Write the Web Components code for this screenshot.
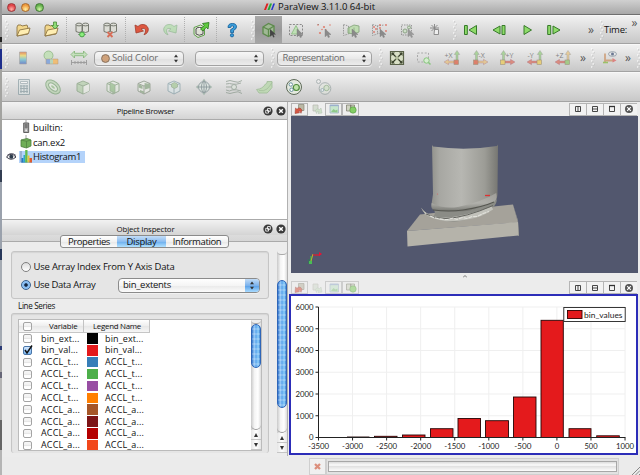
<!DOCTYPE html>
<html lang="en"><head><meta charset="utf-8"><title>ParaView</title>
<style>
html,body{margin:0;width:640px;height:475px;overflow:hidden}
body{font:500 9.5px/12px "Open Sans","Noto Sans",sans-serif;color:#111;background:#999}
</style></head><body>
<pv-window></pv-window>
<script>
function define(name, html, setup){
  const t=document.createElement('template'); t.innerHTML=html;
  customElements.define(name, class extends HTMLElement{
    connectedCallback(){
      if(this.shadowRoot) return;
      const r=this.attachShadow({mode:'open'});
      const c=t.content.cloneNode(true);
      r.append(c);
      if(setup) setup.call(this,r);
    }
  });
}

/* Text set to a given width by adjusting its tracking. */
define('fit-text','<style>:host{display:inline-block;white-space:pre;flex:none}span{display:inline-block}</style><span><slot></slot></span>',function(r){
  const w=+this.getAttribute('w'), s=r.querySelector('span'), n=this.textContent.length;
  const m=s.getBoundingClientRect().width;
  s.style.letterSpacing=((w-m)/n).toFixed(3)+'px'; this.style.width=w+'px';
});

const cube=(f,s)=>`<path d="M4 6.500l6-2.500 6 2.500v7.500l-6 3-6-3z" fill="${f}" stroke="${s}"/><path d="M4 6.500l6 2.500 6-2.500M10 9v8" fill="none" stroke="${s}"/>`;
const arrow='<path d="M11 9l6 5.500-2.600.1 1.200 2.500-1.300.5-1.200-2.500-2 1.700z" fill="#8a8a8a" stroke="#777" stroke-width=".4"/>';
const dash='<path d="M3.500 4.500h13v11h-13z" fill="none" stroke="#8a8a8a" stroke-dasharray="2 1.400"/>';
const cyls='<g fill="#dcddd6" stroke="#6b6e64" stroke-width=".9"><path d="M4 4.500v7q3 2 6 0v-7z"/><path d="M10.500 4.500v7q3 2 6 0v-7z"/><ellipse cx="7" cy="4.500" rx="3" ry="1.400"/><ellipse cx="13.500" cy="4.500" rx="3" ry="1.400"/></g>';
const folder='<path d="M4 16V7l1-2h3l1 1 5-1 1 3v6z" fill="#f2d78c" stroke="#8c7443" stroke-width=".9"/><path d="M4 16l2.500-6L17 8l-1.500 5.500z" fill="#ffeeb2" stroke="#8c7443" stroke-width=".9"/>';
function axis(lbl,box,up,side,right){
  const bx=right?12:3.500;
  return `<g opacity=".68"><path d="M${bx+2} 12V6.500h-1.700l2.700-4 2.700 4h-1.700V12z" fill="${up}" stroke="#777" stroke-width=".4"/>`+
  (right?`<path d="M12 13H6.500v-1.700l-4.500 2.700 4.500 2.700V15H12z" fill="${side}" stroke="#835" stroke-width=".3"/>`:`<path d="M8 13h5.500v-1.700l4.500 2.700-4.500 2.700V15H8z" fill="${side}" stroke="#835" stroke-width=".3"/>`)+
  `<rect x="${bx}" y="12" width="4.500" height="4.500" fill="${box}" stroke="#875" stroke-width=".6"/><text x="${right?2.500:8.500}" y="10" font-size="7" fill="#555">${lbl}</text></g>`;
}
const ICON={
 open:folder,
 save:folder+'<path d="M12.500 9V5.500h-2L14 2l3.500 3.500h-2V9z" transform="rotate(180 14 5.500)" fill="#8edb75" stroke="#4c8b3b" stroke-width=".8"/>',
 connect:cyls+'<path d="M6 14.500h8" stroke="#8a9a8a"/><circle cx="10" cy="14.500" r="2.400" fill="#8dee7e" stroke="#3c9b3b" stroke-width=".9"/>',
 disconnect:cyls+'<path d="M7.500 12l5 5m0-5l-5 5" stroke="#d76e58" stroke-width="1.900"/>',
 undo:'<path d="M3 5l1 8 7.500-2-2.500-2.200q4.500-1.500 4.500 2 0 2-1.500 4 4.500-1.500 4.300-6Q15 4 9.500 4.500 7.500 5 6 6.500z" fill="#dd5740" stroke="#a13c2c" stroke-width=".8"/>',
 redo:'<g opacity=".6" transform="translate(20 0) scale(-1 1)"><path d="M3 5l1 8 7.500-2-2.500-2.200q4.500-1.500 4.500 2 0 2-1.500 4 4.500-1.500 4.300-6Q15 4 9.500 4.500 7.500 5 6 6.500z" fill="#a9dda0" stroke="#74a873" stroke-width=".8"/></g>',
 export:'<path d="M3 7.500v7l4 3 6.500-2.500V7l-4-2z" fill="#e2e4d8" stroke="#5fa04c"/><ellipse cx="8.500" cy="9" rx="3.500" ry="1.500" fill="#fff" stroke="#444"/><path d="M5 9v5q3 2.500 7 0V9" fill="#dfe0d6" stroke="#555"/><path d="M9.500 9l3.800-3.500L11.500 3.500l6.500-1-1 6.500-1.700-1.700L12 11z" fill="#5fcb3f" stroke="#27761a" stroke-width=".8"/>',
 help:'<path d="M6 7.500Q6 3.500 10.300 3.500q4.200 0 4.200 3.400 0 2-3 3.600v2.200H8.700V9.500q3-1.200 3-2.500 0-1.200-1.500-1.200T8.700 7.500z" fill="#3c9edb" stroke="#16639d" stroke-width=".9"/><circle cx="10" cy="15.300" r="1.600" fill="#3c9edb" stroke="#16639d" stroke-width=".9"/>',
 selcube:'<path d="M4 7l5.500-3.500L15 6v7l-5.500 3.500L4 13.500z" fill="#9fb894" stroke="#5d8a4c" stroke-width="1.300"/><path d="M4 7l5.500 2.500L15 6M9.500 9.500v7" stroke="#5d8a4c" stroke-width="1.300" fill="none"/><path d="M11 9l6 5.500-2.600.1 1.200 2.500-1.300.5-1.200-2.500-2 1.700z" fill="#444"/>',
 seltri:dash+'<path d="M10 5.500l4.500 8.500h-9z" fill="#bfe0b6" stroke="#88bb7c" stroke-width=".8"/>'+arrow,
 selpts:dash.replace('2 1.4','1.5 2')+'<g fill="#e08070"><circle cx="10" cy="7" r="1.100"/><circle cx="6" cy="13" r="1.100"/><circle cx="4" cy="5" r=".8"/><circle cx="16" cy="5" r=".8"/><circle cx="8" cy="9.500" r=".8"/><circle cx="12" cy="10" r=".8"/></g>'+arrow,
 selfr:'<path d="M2.500 4.500l5 1.500v8l-5 1.500z" fill="none" stroke="#999" stroke-dasharray="1.500 1"/><path d="M7 8l6-3 5 1v6l-5 2-6-1z" fill="#bfdcb2" stroke="#8aa881" stroke-width=".9"/><path d="M8 7v7M13 7.500v6" stroke="#8aa881" stroke-width=".8"/>'+arrow,
 selfrp:'<path d="M3.500 4.500l5 1.500v8l-5 1.500zM8 6l7-1M8 13l6 1" fill="none" stroke="#999" stroke-dasharray="1.500 1"/><g fill="#dd7769"><circle cx="5" cy="7" r=".9"/><circle cx="7" cy="9" r=".9"/><circle cx="5" cy="12" r=".9"/><circle cx="11" cy="5" r=".9"/><circle cx="17" cy="5" r=".9"/><circle cx="17" cy="11" r=".9"/><circle cx="11" cy="8" r=".9"/></g>'+arrow,
 selblk:'<g opacity=".8"><path d="M4.500 5h10v10h-10z" fill="none" stroke="#888" stroke-dasharray="1.500 1"/><circle cx="8" cy="11" r="2" fill="#cde0c6" stroke="#7c9a74"/><circle cx="12" cy="7.500" r="1.500" fill="#cde0c6" stroke="#7c9a74"/>'+arrow+'</g>',
 pick:'<g stroke="#858585" stroke-width=".9" fill="none"><path d="M5 8h9M9.500 4v7M6.500 5l6 6M12.500 5l-6 6"/><path d="M9.500 9.500h4v5h-4.500z" fill="#eee"/></g>',
 first:'<path d="M3.500 5.500h2.800v9H3.500zM15.500 5.500v9l-7.500-4.500z" fill="#8edb69" stroke="#377a2a"/>',
 prev:'<path d="M13 5.500h3v9h-3zM11 6v8L4 10z" fill="#8edb69" stroke="#377a2a"/>',
 play:'<path d="M7 5.500v9l7.500-4.500z" fill="#8edb69" stroke="#377a2a"/>',
 next:'<path d="M3.700 5.500h3v9h-3zM9 6v8l7-4z" fill="#8edb69" stroke="#377a2a"/>',
 cmap:'<defs><linearGradient id="g" x2="0" y2="1"><stop stop-color="#e88a5d"/><stop offset=".3" stop-color="#e8da85"/><stop offset=".6" stop-color="#8dcbd0"/><stop offset="1" stop-color="#6e86cb"/></linearGradient></defs><path d="M6.500 4h7v12h-7z" fill="url(#g)" stroke="#a9a9a9" stroke-width=".7"/>',
 cedit:'<circle cx="7.500" cy="7.500" r="4.500" fill="#c4dfba" stroke="#8fb585" stroke-width=".8"/><path d="M5 11h4v5H5z" fill="#89a9dc"/><path d="M9 11h3v5H9z" fill="#b8d4ba"/><path d="M12 11h5v5h-5z" fill="#efbd76"/><path d="M5 11h12v5H5z" fill="none" stroke="#b09a80" stroke-width=".5"/>',
 range:'<path d="M2 6.500L5.500 3v2.300h9V3L18 6.500 14.500 10V7.700h-9V10z" fill="#c5dfbd" stroke="#80b475" stroke-width=".8"/><path d="M2.500 12v5M17.500 12v5M2.500 14.500h15M6 13v3M9 13v3M12 13v3M15 13v3" stroke="#999" fill="none" stroke-width=".9"/>',
 reset:'<path d="M3.500 3.500h13v13h-13z" fill="#d9e0c6" stroke="#5b634a" stroke-width="1.200"/><path d="M5 5l10 10M15 5L5 15" stroke="#343c27" stroke-width="1.200"/><path d="M4.500 4.500h3.500l-3.500 3.500zM15.500 4.500h-3.500l3.500 3.500zM4.500 15.500h3.500l-3.500-3.500zM15.500 15.500h-3.500l3.500-3.500z" fill="#3d452e"/><circle cx="10" cy="10" r="1.900" fill="#b4be9c"/>',
 zoombox:'<path d="M3.500 5h11v9h-11z" fill="none" stroke="#aaa" stroke-dasharray="2 1.600"/><circle cx="12.500" cy="12.500" r="2.700" fill="#d6ecd0" stroke="#86c67c"/><path d="M14.500 14.500l2 2" stroke="#86c67c" stroke-width="1.500"/>',
 px:axis('+X','#e2573a','#8fca78','#e8c078',true),mx:axis('-X','#e2573a','#8fca78','#e8c078',false),
 py:axis('+Y','#efcb4e','#8fca78','#db6a57',false),my:axis('-Y','#efcb4e','#8fca78','#db6a57',true),pz:axis('+Z','#8cc564','#e8c078','#db6a57',true),
 center:'<g opacity=".75"><path d="M5 5.500v9M5 12.500h9" stroke="#cb9367" stroke-width="1.800"/><path d="M3 14.500h5" stroke="#8b4" stroke-width="1.600"/><path d="M12.500 10l4 2.500-4 2z" fill="#d66"/><ellipse cx="12.500" cy="6" rx="4" ry="2.300" fill="#eee" stroke="#678" stroke-width=".8"/><circle cx="12.500" cy="6" r="1.500" fill="#457"/></g>',
 calc:'<g opacity=".6"><path d="M4.500 2.500h11v15h-11z" fill="#dbe4e4" stroke="#7b9299"/><path d="M6.500 4.500h7v2h-7z" fill="#fff" stroke="#7b9299" stroke-width=".8"/><path d="M6 9h8M6 11.500h8M6 14.500h8M7 8v8M10 8v8M13 8v8" stroke="#7b9299" stroke-width="1.100"/></g>',
 contour:'<g opacity=".62" transform="rotate(42 10 10)"><ellipse cx="10" cy="10" rx="8.500" ry="5.500" fill="#b7d4ac" stroke="#6c9a68"/><ellipse cx="10" cy="10" rx="5.300" ry="2.800" fill="#e5ede0" stroke="#6c9a68"/><ellipse cx="10" cy="10" rx="2.400" ry="1" fill="#8ab87d"/></g>',
 clip:'<g opacity=".55">'+cube('#a8cb9c','#6b8d63')+'<path d="M10.500 9.500l5.500-2.500v7l-5.500 2.500z" fill="#eef2ea"/></g>',
 slice:'<g opacity=".55">'+cube('#e6eee2','#6b8d63')+'<path d="M7 5.500l5 2.500v8l-5-2z" fill="#83b775" stroke="#6b8d63" stroke-width=".7"/></g>',
 thresh:'<g opacity=".55">'+cube('#edf0e9','#6b7a65')+'<path d="M4.500 7l4 2v3l-4-1.500zM10.500 6l5.500 1v4l-5 1.500zM6 13l4 1.500v2L6 15z" fill="#74986b"/></g>',
 extract:'<g opacity=".55">'+cube('#dce9ec','#70909a')+'<path d="M7.500 7l3-1.500L13.500 7v3l-3 1.500-3-1.500z" fill="#95c284" stroke="#6b8d63" stroke-width=".7"/></g>',
 glyph:'<g opacity=".65" fill="none" stroke="#6d8083"><circle cx="10" cy="10" r="5.500" fill="#dde8e2"/><ellipse cx="10" cy="10" rx="2.500" ry="5.500"/><path d="M4 10h12M10 4v12"/></g><g fill="#a5b6ad"><path d="M8.300 4L10 1.800 11.700 4zM8.300 16l1.700 2.200 1.700-2.200zM4 8.300L1.800 10 4 11.700zM16 8.300l2.200 1.700-2.200 1.700z"/></g>',
 stream:'<g opacity=".65" fill="none" stroke="#849487"><path d="M2 4.500q4-2 8 0t8-1M2 7q4-1 6 0 4 1 9-1M2 13q4 2 6 0 4-1 9 1M2 15.500q4 2 8 0t8 1M2 10h5"/><circle cx="10" cy="10" r="2.500" fill="#dde6dc"/></g>',
 warp:'<path d="M2.500 12.500q6-.5 9-5.500l1.500-1V4.500h5v6q-3 4-5 5.500H5z" fill="#bfd8b5" stroke="#a0bb98" stroke-width=".8"/><path d="M5 13.500q5 1 8-1.500 3-3 5-6.500" fill="none" stroke="#a0bb98" stroke-width=".7"/>',
 group:'<circle cx="10" cy="10" r="7.500" fill="#e4e9df" stroke="#5d6a58"/><circle cx="6.800" cy="7.500" r="1.700" fill="#fff" stroke="#69929e"/><circle cx="12.300" cy="10.500" r="3" fill="#bfe3a9" stroke="#4f8a3d" stroke-width="1.200"/><circle cx="7.500" cy="12.800" r="1.700" fill="#fff" stroke="#69929e"/>',
 level:'<g opacity=".5"><circle cx="11" cy="11.500" r="5.800" fill="#e4e9df" stroke="#788"/><circle cx="12.500" cy="11" r="2.700" fill="#cfe6c2" stroke="#6a9a60"/><circle cx="8.300" cy="13" r="1.500" fill="#fff" stroke="#69929e"/><circle cx="4.500" cy="4.500" r="2" fill="#eee" stroke="#788"/></g>',
 server:'<path d="M10 2v3" stroke="#888" stroke-width=".8"/><path d="M7.700 5h5v9.500h-5z" fill="#aaa" stroke="#555" stroke-width=".9"/><path d="M8.700 7h3M8.700 9h3" stroke="#333" stroke-width=".8"/><path d="M9.300 11.500h1.700v1.700H9.300z" fill="#eee"/>',
 cube:'<path d="M10 2v4" stroke="#888" stroke-width=".8"/><path d="M5 7l6-1.500 4 1.500v6l-4.500 2L5 13.500z" fill="#6fae57" stroke="#4d7d3e" stroke-width=".8"/><path d="M5 7l5.500 1.300L15 7M10.500 8.300v6.500" stroke="#4d7d3e" fill="none" stroke-width=".7"/>',
 hist:'<path d="M5 4v11h11" stroke="#678" fill="none" stroke-width=".7"/><path d="M5.500 11h2v4.500h-2z" fill="#2677c4"/><path d="M7.500 8h1.600v7.500H7.500z" fill="#2ba9c7"/><path d="M9.200 3h2.300v12.500H9.200z" fill="#63bb4b"/><path d="M11.500 8.500h2v7h-2z" fill="#e6c63c"/><path d="M13.500 11h2.500v4.500h-2.500z" fill="#e05a2b"/>',
 eye:'<path d="M5.500 10q4.500-5.500 9.500 0-5 4.500-9.500 0z" fill="#f4f4f4" stroke="#223" stroke-width=".9"/><circle cx="10.300" cy="9.800" r="2" fill="#2c3b4c"/><path d="M6 8.500q4.500-4 9 0" stroke="#445" fill="none" stroke-width=".8"/>',
 float:'<circle cx="10" cy="10" r="4.600" fill="#3a3a3a"/><path d="M9.500 7.500h2.800v2.800h-2.800zM7.700 9.300h2.800v2.800H7.700z" fill="#3a3a3a" stroke="#fff" stroke-width=".8"/>',
 close:'<circle cx="10" cy="10" r="4.600" fill="#3a3a3a"/><path d="M8.200 8.200l3.600 3.600M11.800 8.200l-3.600 3.600" stroke="#fff" stroke-width="1.400"/>',
 split:'<path d="M7.500 7.500h5v5h-5zM10 7.500v5" fill="none" stroke="#333" stroke-width=".9"/>',
 splitv:'<path d="M7.500 7.500h5v5h-5zM7.500 10h5" fill="none" stroke="#333" stroke-width=".9"/>',
 max:'<path d="M7.500 7.500h5v5h-5z" fill="none" stroke="#333" stroke-width=".9"/><path d="M7 7.500h6" stroke="#333" stroke-width="1.300"/>',
 closev:'<circle cx="10" cy="10" r="4" fill="#555"/><path d="M8.200 8.200l3.600 3.600M11.800 8.200l-3.600 3.600" stroke="#fff" stroke-width="1.200"/>',
 vundo:'<path d="M8.500 5.500h5.500v6H8.500z" fill="#bbb9a6" stroke="#887" stroke-width=".7"/><path d="M5 14.500l.5-5.500 1.500 1.300q3-3 5 1l-1 3q-1-3-2.500-2l1 1.500z" fill="#d65643" stroke="#963b2e" stroke-width=".5"/>',
 vredo:'<g opacity=".45"><path d="M6 6h5v6H6z" fill="#b5c8ad" stroke="#776" stroke-width=".7"/><path d="M15 14l-1-5-1.500 1.500q-3-2-4 1l1 3q1-3 2.500-2l-1 2z" fill="#a6cd9a" stroke="#686" stroke-width=".5"/></g>',
 vcam:'<path d="M6 6h8.500v8H6z" fill="#c7e6cc" stroke="#9fb3c4" stroke-width=".8"/><path d="M6 6.500h8.500" stroke="#9bb0cc" stroke-width="1.300"/><path d="M7 13l2.500-3 2 1.500 2-1v3z" fill="#8fc98a"/>',
 vgreen:'<path d="M5.500 6h4.500v6H5.500zM9.500 6h4v6h-4z" fill="#d0d3c3" stroke="#776" stroke-width=".7"/><circle cx="12" cy="11" r="3.200" fill="#84ce65" stroke="#4f943b" stroke-width=".6"/>'
};
define('pv-icon','<style>:host{display:flex;flex:none;width:var(--w,20px);height:var(--h,20px);align-items:center;justify-content:center}svg{flex:none;overflow:visible;font:400 10px "Open Sans",sans-serif}</style><svg width="20" height="20" viewBox="0 0 20 20"></svg>',function(r){
  r.querySelector('svg').innerHTML=ICON[this.getAttribute('name')];
  const w=this.getAttribute('w'); if(w) this.style.setProperty('--w',w+'px');
});
define('pv-handle','<style>:host{display:block;flex:none;width:4px;height:20px}svg{display:block}</style><svg width="4" height="20"></svg>',function(r){
  let s='';for(let i=0;i<7;i++){const x=i%2?2.200:.8,y=1+i*3;s+=`<circle cx="${x+.7}" cy="${y+.7}" r=".8" fill="#bdbdbd"/><circle cx="${x}" cy="${y}" r=".8" fill="#fff"/>`}
  r.querySelector('svg').innerHTML=s;
});
define('pv-sep','<style>:host{display:block;flex:none;width:3px;height:26px;background:repeating-linear-gradient(#b0b0b0 0 1px,transparent 1px 2px) 1px 0/1px 100% no-repeat}</style>');
define('pv-gap','<style>:host{display:block;flex:none}</style>',function(){this.style.width=this.getAttribute('w')+'px'});
define('pv-toolbar','<style>:host{display:flex;align-items:center;height:29px;box-sizing:border-box;background:linear-gradient(#f1f1f1,#dedede 45%,#c8c8c8);border-top:1px solid #f8f8f8;border-bottom:1px solid #a3a3a3;overflow:hidden;padding-left:3px}</style><slot></slot>');
define('pv-more','<style>:host{display:block;flex:none;text-align:center;color:#555;font:400 12px/10px "Open Sans",sans-serif}</style><slot></slot>',function(){this.style.width=this.getAttribute('w')+'px'});
define('pv-combo',`<style>:host{display:flex;align-items:center;box-sizing:border-box;flex:none;height:15px;border:1px solid #a2a2a2;border-radius:4px;background:linear-gradient(#f7f7f7,#e9e9e9 50%,#dfdfdf 51%,#ececec);box-shadow:0 1px 0 #f1f1f1;color:#6b6b6b;overflow:hidden}
 .t{flex:1;display:flex;align-items:center}.a{width:14px;height:100%;display:flex;align-items:center;justify-content:center}
 :host([active]){border-color:#8b8b8b;background:linear-gradient(#fff,#f5f5f5 50%,#e9e9e9 51%,#fbfbfb);color:#111}:host([active]) .a{background:linear-gradient(#c2dcf7,#7cb2ec 50%,#559de7 51%,#a9dbff);}</style>
 <div class="t"><slot></slot></div><div class="a"><svg width="6" height="9"><path d="M1 3.300L3 .5l2 2.800zM1 5.700L3 8.500l2-2.800z" fill="#333"/></svg></div>`,function(){this.style.width=this.getAttribute('w')+'px'});
define('pv-titlebar',`<style>:host{display:flex;height:15px;box-sizing:border-box;background:linear-gradient(#d0d0d0,#a8a8a8);border-bottom:1px solid #6f6f6f;align-items:center;color:#111}
 i{width:9px;height:9px;border-radius:50%;box-sizing:border-box;margin-left:5px;border:1px solid #933}
 .r{background:radial-gradient(circle at 50% 75%,#ffb1a8,#e2474b 60%);border-color:#9e3438}.y{background:radial-gradient(circle at 50% 75%,#fff0a0,#ee9a3d 65%);border-color:#aa6a2b}.g{background:radial-gradient(circle at 50% 75%,#d0f5a5,#63b04b 65%);border-color:#417a34}
 svg{margin-left:220px;margin-right:3px}.l{display:flex}</style><div class="l"><i class="r"></i><i class="y"></i><i class="g"></i></div>
 <svg width="11" height="8"><path d="M2.500 .5h2L2 7H0z" fill="#d22"/><path d="M6 .5h2L5.500 7h-2z" fill="#2a3"/><path d="M9.300 .5H11L8.500 7H7z" fill="#23c"/></svg><slot></slot>`);
define('dock-title','<style>:host{display:flex;align-items:center;box-sizing:border-box;height:18px;background:linear-gradient(#f2f2f2,#d4d4d4);font-size:7.900px}.c{flex:1;padding-left:28px;display:flex;justify-content:center}pv-icon{--w:13px}</style><div class="c"><slot></slot></div><pv-icon name="float"></pv-icon><pv-icon name="close"></pv-icon>');
define('tree-row','<style>:host{display:flex;align-items:center;height:14.500px;padding-left:1px}.e{width:16px;height:14px;display:flex;align-items:center;justify-content:center}.b{display:flex;align-items:center;height:12px;padding-right:4px}:host([sel]) .b{background:#b4d3fa}pv-icon{--w:14px;--h:12px}</style><div class="e"></div><div class="b"><pv-icon></pv-icon><slot></slot></div>',function(r){
  const i=document.createElement('pv-icon');i.setAttribute('name',this.getAttribute('icon'));r.querySelector('.b pv-icon').replaceWith(i);
  if(this.hasAttribute('sel')){const e=document.createElement('pv-icon');e.setAttribute('name','eye');r.querySelector('.e').append(e);}
});
define('tab-bar',`<style>:host{display:flex;justify-content:center;height:13px;background:linear-gradient(#dcdcdc,#d6d6d6 6px,#aaa 6px,#aaa 7px,#ececec 7px)}
 .g{display:flex;box-sizing:border-box;border:1px solid #8b8b8b;border-radius:3px;overflow:hidden;background:linear-gradient(#fff,#f1f1f1 50%,#e6e6e6 51%,#fbfbfb)}
 .g div{display:flex;justify-content:center;align-items:center;height:11px}.s{background:linear-gradient(#c5def8,#8cbdf0 50%,#69aced 51%,#b2e2ff)}</style>
 <div class="g"><div style="width:56px"><fit-text w="42">Properties</fit-text></div><div class="s" style="width:49px"><fit-text w="30">Display</fit-text></div><div style="width:62px"><fit-text w="48.500">Information</fit-text></div></div>`);
define('radio-row','<style>:host{display:flex;align-items:center;height:18px}i{width:10px;height:10px;border-radius:50%;border:1px solid #808080;background:linear-gradient(#ddd,#fff);box-sizing:border-box;margin-right:2.500px;flex:none}:host([on]) i{border-color:#3a6290;background:radial-gradient(circle,#14263f 0 1.300px,#83b8ef 2.200px,#a8d6fc)}</style><i></i><slot></slot>');
define('scroll-bar',`<style>:host{display:flex;flex-direction:column;flex:none;width:10px;box-sizing:border-box;background:linear-gradient(90deg,#c9c9c9,#f4f4f4 35%,#fff 70%,#dcdcdc)}
 .top{height:4px;border-bottom:1px solid #aaa;border-radius:0 0 5px 5px;background:#eee;box-sizing:border-box}.th{box-sizing:border-box;border-radius:5px;border:1px solid #2f66b8;background:repeating-linear-gradient(#fff0 0 3px,#ffffff30 3px 5px),linear-gradient(90deg,#2f73cb,#9acbf7 28%,#5ca5ec 50%,#8fd0fa 78%,#3b7fd0)}
 .sp{flex:1;border-bottom:1px solid #999;border-radius:0 0 5px 5px}.a{height:10px;box-sizing:border-box;border-bottom:1px solid #c5c5c5;background:linear-gradient(90deg,#e5e5e5,#fff,#e5e5e5);display:flex;justify-content:center;align-items:center}</style>
 <div class="top"></div><div class="th"></div><div class="sp"></div><div class="a"><svg width="4" height="4"><path d="M0 4L2 0l2 4z" fill="#333"/></svg></div><div class="a"><svg width="4" height="4"><path d="M0 0l2 4 2-4z" fill="#333"/></svg></div>`,function(r){
  const t=r.querySelector('.th');t.style.height=this.getAttribute('thumb')+'px';t.style.marginTop=this.getAttribute('offset')+'px';});
define('series-table',`<style>:host{display:block;flex:1;background:#fff;overflow:hidden}
 .h,.r{display:grid;grid-template-columns:22px 46px 18px 60px;align-items:center}.h{height:12.500px;width:131px;box-sizing:border-box;border-bottom:1px solid #c6c6c6;background:linear-gradient(#fff,#eee 50%,#e6e6e6 51%,#f6f6f6);grid-template-columns:22px 43px 66px;font-size:7.900px;overflow:hidden}
 .h>div{height:12px;display:flex;align-items:center;border-right:1px solid #c3c3c3;padding-left:8px}.h>div:last-child{padding-left:9px}
 .r{height:11.870px;font-size:9px}b{width:9px;height:9px;box-sizing:border-box;border:1px solid #a4a4a4;border-radius:2px;background:linear-gradient(#f7f7f7,#f0f0f0 48%,#dedede 52%,#fff 65%);margin-left:4px;display:block}.on{border-color:#4a76a8;background:linear-gradient(#d5e9ff,#7ab6f2)}b svg{display:block;overflow:visible}
 u{display:block;width:11px;height:10.500px}</style><div class="h"><b></b><div><fit-text w="28.500">Variable</fit-text></div><div><fit-text w="48">Legend Name</fit-text></div></div>`,function(r){
  const rows=[['bin_ext...','#000',38.5],['bin_val...','#e41a1c',37],['ACCL_t...','#377eb8',37.5],['ACCL_t...','#4daf4a',37.5],['ACCL_t...','#984ea3',37.5],['ACCL_t...','#ff7f00',37.5],['ACCL_a...','#a65628',39],['ACCL_a...','#7d1416',39],['ACCL_a...','#b50000',39],['ACCL_a...','#f2471b',39]];
  rows.forEach(([t,c,w],i)=>{const d=document.createElement('div');d.className='r';
   d.innerHTML=`<b class="${i==1?'on':''}">${i==1?'<svg width="7" height="7"><path d="M1 3l2 3L8-1.500" stroke="#111" stroke-width="1.500" fill="none"/></svg>':''}</b><fit-text w="${w}">${t}</fit-text><u style="background:${c}"></u><fit-text w="${w}">${t}</fit-text>`;
   r.append(d);});
});
define('view-header',`<style>:host{display:flex;align-items:center;height:14px;background:#ececec;justify-content:space-between}div{display:flex}pv-icon{--w:17px;--h:13px;box-sizing:border-box;border:1px solid #b5b5b5;border-right-width:0;background:#f2f2f2}.r{padding-right:1px}.l{padding-left:0}.l pv-icon{background:#eee;border-right:1px solid #b5b5b5;--w:17px}.l pv-icon:nth-child(2){border-color:transparent}:host([dim]) .l{opacity:.55}</style>
 <div class="l"><pv-icon name="vundo"></pv-icon><pv-icon name="vredo"></pv-icon><pv-icon name="vcam"></pv-icon><pv-icon name="vgreen"></pv-icon></div><div class="r"><pv-icon name="split"></pv-icon><pv-icon name="splitv"></pv-icon><pv-icon name="max"></pv-icon><pv-icon name="closev"></pv-icon></div>`);
define('render-view',`<style>:host{display:block;background:#52576e}svg{display:block}</style><svg width="347" height="157" viewBox="291 116 347 157">
 <defs><linearGradient id="c"><stop stop-color="#92928c"/><stop offset=".12" stop-color="#a7a7a2"/><stop offset=".45" stop-color="#b7b7b2"/><stop offset=".8" stop-color="#9c9c96"/><stop offset="1" stop-color="#777772"/></linearGradient><linearGradient id="d" x2="0" y2="1"><stop stop-color="#aaa9a4"/><stop offset=".55" stop-color="#b5b5b0"/><stop offset="1" stop-color="#64655f"/></linearGradient></defs>
 <path d="M420 214.500L513 204.500 518 222.500 407 231z" fill="#a5a29a"/><path d="M407 231L518 222 518.500 235.500 407.500 246.500z" fill="#b5b3aa"/><path d="M513 204.500l5 18v13.500l1-.5-1-15z" fill="#a09f96"/>
 <path d="M421 207.500q4 6 12 9 3-2 1-7l62-12q2 4-2 9-4 6-17 10-17 6-28 5-15-2-23-7-4-3-5-7z" fill="#8b8c86"/>
 <path d="M421 207.500q5 8 18 10 20 1 53-11l1 3q-12 8-23 9.500-15 3-25 2-14-2-20-7z" fill="#c2c2bb"/>
 <path d="M426 214q10 5 20 4.500 20-1 47-13" fill="none" stroke="#646560" stroke-width="1"/><path d="M430 216q10 4 18 3.500l5-1.500 4 1.500 5-2 5 1 5-2 5 0 6-3 6-2" fill="none" stroke="#e3e3dd" stroke-width="1.100" stroke-dasharray="4 1"/>
 <path d="M432 145l1 1.500q32 4.500 64-.5l1-1.500-.5 47q.5 7-3 10-12 6-27 9-20 1-34-1-3-2-1.500-8.500l1-7z" fill="url(#c)"/>
 <path d="M431.700 203q11 6 26 4 24-5 38.500-14 1.500 6-2 9-12 6-27 9-20 1-34-1-3-2-1.500-7z" fill="url(#d)" opacity=".75"/><path d="M433 210q16 2 30 0 20-3 31-8" fill="none" stroke="#555650" stroke-width="1.200"/>
 <path d="M485 195.500h5" stroke="#d33" stroke-width="1.300"/><circle cx="437.500" cy="194" r=".6" fill="#c66"/>
 <g fill="none"><path d="M311 261v-5" stroke="#37b450" stroke-width="1.300"/><path d="M311 261l2-7" stroke="#b9b72c" stroke-width="1"/><path d="M313 255h7" stroke="#c6263a" stroke-width="1.500"/><path d="M309 259v5" stroke="#2b7f56"/></g><path d="M309 261h3v3h-3z" fill="#49bd55"/><path d="M319 252l3 2-3 2z" fill="#e13"/>
</svg>`);
define('bar-chart',`<style>:host{display:block;box-sizing:border-box;border:2px solid #2c2db8;background:#fff}svg{display:block;font:400 8px "Lato","Inter",sans-serif}</style><svg width="345" height="157" viewBox="291 296 345 157"></svg>`,function(r){
  let s='';const X=i=>318.5+i*34.06,Y=v=>437.5-v*.02175;
  for(let i=1;i<10;i++)s+=`<path d="M${X(i)} 307V437" stroke="#efefef"/>`;
  for(let i=1;i<7;i++)s+=`<path d="M319 ${Y(i*1000)}H625" stroke="#efefef"/>`;
  [[347.5,369,437],[374.5,397,436.3],[402.5,425,435],[430.5,453,428.7],[458,480.5,418.5],[485.5,508.5,420.7],[513.5,536,397],[541,563.3,320.3],[569,591,428.7],[596.7,619.3,435.8]].forEach(([a,b,y])=>s+=`<rect x="${a}" y="${y}" width="${b-a}" height="${437.5-y}" fill="#e41a1c" stroke="#250505" stroke-width=".9"/>`);
  s+='<path d="M318.500 307V437.500H625.500" fill="none" stroke="#222"/>';
  for(let i=0;i<10;i++){const t=String(-3500+i*500),w={5:21,4:17,1:4.5,3:13}[t.length];
   const ww=t==='1000'?18:w; s+=`<path d="M${X(i)} 437.500v3" stroke="#222"/><text x="${X(i)-ww/2}" y="449.200" textLength="${ww}" lengthAdjust="spacingAndGlyphs" fill="#222">${t}</text>`;}
  for(let i=0;i<7;i++){const w=i?18:4.5;s+=`<path d="M315.500 ${Y(i*1000)}h3" stroke="#222"/><text x="${313.5-w}" y="${Y(i*1000)+(i?2.800:2)}" textLength="${w}" lengthAdjust="spacingAndGlyphs" fill="#222">${i*1000}</text>`;}
  s+='<rect x="563.800" y="307.500" width="61.400" height="14" fill="#fff" stroke="#222" stroke-width=".9"/><rect x="567.500" y="310.500" width="14.500" height="8" fill="#e41a1c" stroke="#300" stroke-width=".9"/><text x="584" y="317.800" textLength="38.500" lengthAdjust="spacingAndGlyphs" fill="#222">bin_values</text>';
  r.querySelector('svg').innerHTML=s;
});
define('status-bar',`<style>:host{display:flex;height:19px;background:#ebebeb;align-items:center;padding-left:307px;box-sizing:border-box}.x{width:17px;height:17px;box-sizing:border-box;border:1px solid #cfcfcf;background:#f0f0f0;display:flex;align-items:center;justify-content:center}.f{width:293px;height:17px;box-sizing:border-box;border:1px solid #d0d0d0;background:#e2e2e2;padding:2px 1px}.p{height:11px;box-sizing:border-box;border:1px solid #a7a7a7;background:linear-gradient(#dcdcdc,#fcfcfc 35%,#e2e2e2 50%,#fdfdfd)}.g{margin-left:auto;align-self:flex-end}</style>
 <div class="x"><svg width="7" height="7"><path d="M1 1l5 5M6 1L1 6" stroke="#dc8f7c" stroke-width="2.300"/></svg></div><div class="f"><div class="p"></div></div><svg class="g" width="9" height="9"><path d="M0 9l9-9M3.500 9L9 3.500M7 9l2-2" stroke="#888"/></svg>`);
define('pv-window',`<style>
 :host{display:grid;grid-template-columns:2px 1fr;width:640px;height:475px;overflow:hidden}
 .desk{background:linear-gradient(#999 0 37px,#222 37px 42px,#999 42px 49px,#1d2d8b 49px 69px,#a3a3a0 69px 130px,#8b93a5 130px 170px,#333e52 170px 182px,#9aa1ac 182px 249px,#28395b 249px 260px,#a5abb3 260px 346px,#2b3a75 346px 350px,#a9a9a9 350px 372px,#667 372px 378px,#b5b5b5 378px 420px,#656565 420px 450px,#b5b5b5 450px)}
 .win{background:#ececec;display:flex;flex-direction:column;min-width:0}
 .sel{display:flex;background:linear-gradient(#a9a9a9,#989898 50%,#a6a6a6);height:27px;align-items:center}
 .main{display:grid;grid-template-columns:286px 1fr;height:355px}
 .left{display:flex;flex-direction:column;border-right:1px solid #b1b1b1;box-sizing:border-box;height:354px;overflow:hidden}
 .tree{height:101px;background:#fff;padding-top:1px;box-sizing:border-box;border-top:1px solid #aaa;border-bottom:1px solid #aaa}
 .insp{display:flex;height:205px;padding-top:3px;box-sizing:border-box}
 .body{width:258px;margin-left:9px;margin-right:8px;display:flex;flex-direction:column}
 .box{border:1px solid #c5c5c5;border-radius:3px;background:#e5e5e5;box-sizing:border-box;box-shadow:inset 0 1px 1px #d4d4d4}
 .b1{height:49px;padding:6px 0 0 9px}.b2{flex:1;padding:5px 6px 2px 6px;border-bottom:0;display:flex}
 .tab{display:flex;width:244px;border:1px solid #bbb;box-sizing:border-box;height:132px}
 .row{display:flex;align-items:center}.cap{height:14px;padding-left:7px;font-size:8.100px;display:flex;align-items:center}
 .right{padding:0 2px 0 3px;display:flex;flex-direction:column}
 .split{height:8px}bar-chart{margin-left:-2px;height:161px}
 </style><div class="desk"></div><div class="win">
 <pv-titlebar><fit-text w="97">ParaView 3.11.0 64-bit</fit-text></pv-titlebar>
 <pv-toolbar><pv-handle></pv-handle><pv-icon name="open" w="28"></pv-icon><pv-icon name="save" w="27"></pv-icon><pv-gap w="1"></pv-gap><pv-sep></pv-sep><pv-icon name="connect" w="28"></pv-icon><pv-icon name="disconnect" w="28"></pv-icon><pv-sep></pv-sep><pv-icon name="undo" w="29"></pv-icon><pv-icon name="redo" w="27"></pv-icon><pv-sep></pv-sep><pv-icon name="export" w="29"></pv-icon><pv-sep></pv-sep><pv-icon name="help" w="28"></pv-icon><pv-gap w="5"></pv-gap><pv-handle></pv-handle><div class="sel"><pv-icon name="selcube" w="27"></pv-icon></div><pv-icon name="seltri" w="28"></pv-icon><pv-icon name="selpts" w="27"></pv-icon><pv-icon name="selfr" w="28"></pv-icon><pv-icon name="selfrp" w="28"></pv-icon><pv-icon name="selblk" w="27"></pv-icon><pv-icon name="pick" w="29"></pv-icon><pv-gap w="4"></pv-gap><pv-handle></pv-handle><pv-icon name="first" w="28"></pv-icon><pv-icon name="prev" w="28"></pv-icon><pv-icon name="play" w="27"></pv-icon><pv-icon name="next" w="28"></pv-icon><pv-gap w="16"></pv-gap><pv-more w="14">»</pv-more><pv-gap w="2"></pv-gap><pv-handle></pv-handle><fit-text w="23">Time:</fit-text><pv-gap w="4"></pv-gap><pv-more w="7" style="align-self:flex-start;margin-top:2px">»</pv-more></pv-toolbar>
 <pv-toolbar style="height:28px"><pv-handle></pv-handle><pv-icon name="cmap" w="28"></pv-icon><pv-icon name="cedit" w="28"></pv-icon><pv-icon name="range" w="27"></pv-icon><pv-gap w="2"></pv-gap>
 <pv-combo w="90"><svg width="9" height="9" style="margin:0 2px 0 6px"><circle cx="4.500" cy="4.500" r="3.900" fill="#cfa27b" stroke="#87715e"/></svg><fit-text w="46">Solid Color</fit-text></pv-combo><pv-gap w="11"></pv-gap><pv-combo w="69"></pv-combo><pv-gap w="7"></pv-gap><pv-handle></pv-handle><pv-gap w="2"></pv-gap><pv-combo w="95"><pv-gap w="4.500"></pv-gap><fit-text w="62">Representation</fit-text></pv-combo><pv-gap w="7"></pv-gap><pv-handle></pv-handle><pv-icon name="reset" w="27"></pv-icon><pv-icon name="zoombox" w="28"></pv-icon><pv-icon name="px" w="28"></pv-icon><pv-icon name="mx" w="27"></pv-icon><pv-icon name="py" w="28"></pv-icon><pv-icon name="my" w="28"></pv-icon><pv-icon name="pz" w="27"></pv-icon><pv-more w="14">»</pv-more><pv-gap w="1"></pv-gap><pv-handle></pv-handle><pv-gap w="4"></pv-gap><pv-icon name="center" w="22"></pv-icon><pv-more w="14">»</pv-more><pv-gap w="2"></pv-gap><pv-handle></pv-handle></pv-toolbar>
 <pv-toolbar style="height:30px"><pv-handle></pv-handle><pv-icon name="calc" w="29"></pv-icon><pv-icon name="contour" w="30"></pv-icon><pv-icon name="clip" w="30"></pv-icon><pv-icon name="slice" w="30.500"></pv-icon><pv-icon name="thresh" w="30"></pv-icon><pv-icon name="extract" w="30.500"></pv-icon><pv-icon name="glyph" w="30"></pv-icon><pv-icon name="stream" w="30"></pv-icon><pv-icon name="warp" w="30"></pv-icon><pv-icon name="group" w="30"></pv-icon><pv-icon name="level" w="30"></pv-icon></pv-toolbar>
 <div class="main"><div class="left">
  <dock-title style="height:17px"><fit-text w="57.500">Pipeline Browser</fit-text></dock-title>
  <div class="tree"><tree-row icon="server"><fit-text w="29.500">builtin:</fit-text></tree-row><tree-row icon="cube"><fit-text w="32">can.ex2</fit-text></tree-row><tree-row icon="hist" sel><fit-text w="48">Histogram1</fit-text></tree-row></div>
  <dock-title style="height:15px;padding-top:3px"><fit-text w="58">Object Inspector</fit-text></dock-title>
  <tab-bar></tab-bar>
  <div class="insp"><div class="body"><div class="box b1"><radio-row><fit-text w="141">Use Array Index From Y Axis Data</fit-text></radio-row><div class="row"><radio-row on><fit-text w="62">Use Data Array</fit-text></radio-row><pv-gap w="22"></pv-gap><pv-combo active w="142"><pv-gap w="4.500"></pv-gap><fit-text w="48">bin_extents</fit-text></pv-combo></div></div>
   <div class="cap"><fit-text w="37">Line Series</fit-text></div>
   <div class="box b2"><div class="tab"><series-table></series-table><scroll-bar offset="0" thumb="44"></scroll-bar></div></div></div>
   <scroll-bar offset="25" thumb="128"></scroll-bar></div>
 </div><div class="right">
  <view-header></view-header><render-view></render-view><div class="split"><svg width="4" height="3" style="display:block;margin:0 auto;padding-top:2px"><path d="M0 2.500L2 .5l2 2" stroke="#777" fill="none"/></svg></div><view-header dim style="height:13px"></view-header><bar-chart></bar-chart>
 </div></div>
 <status-bar></status-bar></div>`);
</script></body></html>
